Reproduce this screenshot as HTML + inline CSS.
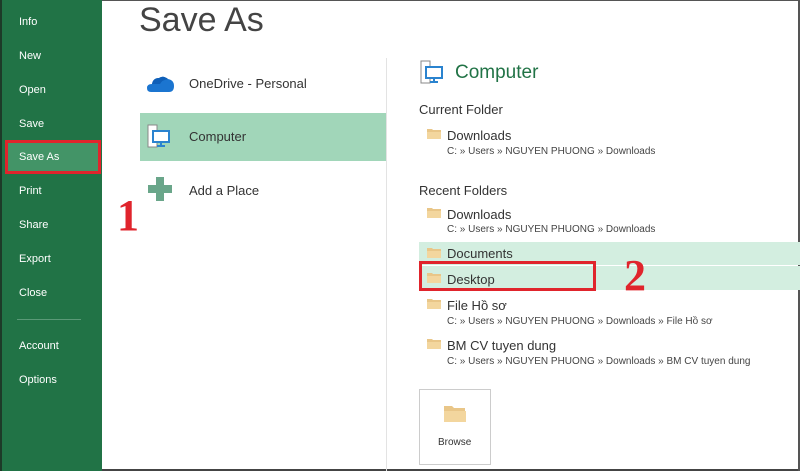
<!DOCTYPE html>
<html><head><meta charset="utf-8"><style>
*{margin:0;padding:0;box-sizing:border-box}
body{width:800px;height:471px;overflow:hidden;background:#fff;font-family:"Liberation Sans",sans-serif;position:relative;color:#333}
.a{position:absolute;white-space:nowrap}
#side{position:absolute;left:0;top:0;width:102px;height:471px;background:#217346;border-left:2px solid #1d3a28}
.si{position:absolute;left:17px;color:#fff;font-size:11px}
.t{font-size:13px;color:#333}
.p{font-size:10px;color:#444}
</style></head><body>
<div style="position:absolute;left:0;top:0;width:800px;height:1px;background:#555"></div>
<div style="position:absolute;left:0;bottom:0;width:800px;height:2px;background:#444"></div>
<div style="position:absolute;right:0;top:0;width:2px;height:471px;background:#555"></div>
<div id="side">
<div class="si" style="top:16px">Info</div>
<div class="si" style="top:50px">New</div>
<div class="si" style="top:84px">Open</div>
<div class="si" style="top:118px">Save</div>
<div style="position:absolute;left:3px;top:140px;width:96px;height:34px;background:#439467;border:3px solid #e0242c"></div>
<div class="si" style="top:151px">Save As</div>
<div class="si" style="top:185px">Print</div>
<div class="si" style="top:219px">Share</div>
<div class="si" style="top:253px">Export</div>
<div class="si" style="top:287px">Close</div>
<div style="position:absolute;left:15px;top:319px;width:64px;height:1px;background:#5a9977"></div>
<div class="si" style="top:340px">Account</div>
<div class="si" style="top:374px">Options</div>
</div>
<div class="a" style="left:139px;top:1px;font-size:34px;color:#444">Save As</div>
<div style="position:absolute;left:386px;top:58px;width:1px;height:413px;background:#e3e3e3"></div>
<svg class="a" style="left:147px;top:73px" width="27" height="20" viewBox="0 0 27 20"><path d="M4 19 Q0 19 0 15 Q0 11 5 11 Q6 5 12 5 Q16 2 21 6 Q27 7 27 13 Q27 19 22 19Z" fill="#1b75d0"/><path d="M5 11 Q6 5 12 5 Q16 2 21 6 Q15 7 13 11Z" fill="#0f5fb8"/></svg>
<div class="a" style="left:189px;top:76px;font-size:13px">OneDrive - Personal</div>
<div style="position:absolute;left:140px;top:113px;width:246px;height:48px;background:#a1d6b9"></div>
<svg class="a" style="left:147px;top:124px" width="26" height="26" viewBox="0 0 26 26"><rect x="1" y="1" width="9" height="22" fill="#fff" stroke="#888"/><rect x="6" y="7" width="16" height="11" fill="#fff" stroke="#2a83cf" stroke-width="2"/><path d="M14 18v3M10 22h8" stroke="#2a83cf" stroke-width="2"/></svg>
<div class="a" style="left:189px;top:129px;font-size:13px">Computer</div>
<svg class="a" style="left:147px;top:176px" width="26" height="26" viewBox="0 0 26 26"><path d="M9 1h8v8h8v8h-8v8h-8v-8h-8v-8h8z" fill="#6aa68a"/></svg>
<div class="a" style="left:189px;top:183px;font-size:13px">Add a Place</div>
<div class="a" style="left:117px;top:190px;font-family:'Liberation Serif',serif;font-weight:bold;font-size:44px;color:#e0242c">1</div>

<svg class="a" style="left:420px;top:60px" width="26" height="26" viewBox="0 0 26 26"><rect x="1" y="1" width="9" height="22" fill="#fff" stroke="#888"/><rect x="6" y="7" width="16" height="11" fill="#fff" stroke="#2a83cf" stroke-width="2"/><path d="M14 18v3M10 22h8" stroke="#2a83cf" stroke-width="2"/></svg>
<div class="a" style="left:455px;top:62px;font-size:19px;color:#217346">Computer</div>
<div class="a t" style="left:419px;top:102px">Current Folder</div>
<div class="a t" style="left:447px;top:128px">Downloads</div>
<div class="a p" style="left:447px;top:146px">C: » Users » NGUYEN PHUONG » Downloads</div>
<div class="a t" style="left:419px;top:183px">Recent Folders</div>
<div class="a t" style="left:447px;top:207px">Downloads</div>
<div class="a p" style="left:447px;top:224px">C: » Users » NGUYEN PHUONG » Downloads</div>
<div style="position:absolute;left:419px;top:242px;width:381px;height:23px;background:#d3eee0"></div>
<div style="position:absolute;left:419px;top:266px;width:381px;height:24px;background:#d3eee0"></div>
<div class="a t" style="left:447px;top:246px">Documents</div>
<div class="a t" style="left:447px;top:272px">Desktop</div>
<div style="position:absolute;left:419px;top:261px;width:177px;height:30px;border:3px solid #e0242c"></div>
<div class="a" style="left:624px;top:250px;font-family:'Liberation Serif',serif;font-weight:bold;font-size:44px;color:#e0242c">2</div>
<div class="a t" style="left:447px;top:298px">File Hồ sơ</div>
<div class="a p" style="left:447px;top:316px">C: » Users » NGUYEN PHUONG » Downloads » File Hồ sơ</div>
<div class="a t" style="left:447px;top:338px">BM CV tuyen dung</div>
<div class="a p" style="left:447px;top:356px">C: » Users » NGUYEN PHUONG » Downloads » BM CV tuyen dung</div>
<div style="position:absolute;left:419px;top:389px;width:72px;height:76px;border:1px solid #ccc;background:#fff"></div>
<svg class="a" style="left:443px;top:403px" width="24" height="20" viewBox="0 0 24 20"><path d="M1 3h8l2 2h11v14H1z" fill="#e9c688"/><path d="M1 8h22v11H1z" fill="#f3d69e"/></svg>
<div class="a" style="left:438px;top:437px;font-size:10px;color:#333">Browse</div>
<svg class="a" style="left:427px;top:128px" width="14" height="11"><path d="M0 1h5l1 1h8v9H0z" fill="#e9c688"/><path d="M0 4h14v7H0z" fill="#f3d69e"/></svg>
<svg class="a" style="left:427px;top:207px" width="14" height="11"><path d="M0 1h5l1 1h8v9H0z" fill="#e9c688"/><path d="M0 4h14v7H0z" fill="#f3d69e"/></svg>
<svg class="a" style="left:427px;top:247px" width="14" height="11"><path d="M0 1h5l1 1h8v9H0z" fill="#e9c688"/><path d="M0 4h14v7H0z" fill="#f3d69e"/></svg>
<svg class="a" style="left:427px;top:272px" width="14" height="11"><path d="M0 1h5l1 1h8v9H0z" fill="#e9c688"/><path d="M0 4h14v7H0z" fill="#f3d69e"/></svg>
<svg class="a" style="left:427px;top:298px" width="14" height="11"><path d="M0 1h5l1 1h8v9H0z" fill="#e9c688"/><path d="M0 4h14v7H0z" fill="#f3d69e"/></svg>
<svg class="a" style="left:427px;top:338px" width="14" height="11"><path d="M0 1h5l1 1h8v9H0z" fill="#e9c688"/><path d="M0 4h14v7H0z" fill="#f3d69e"/></svg>
</body></html>
